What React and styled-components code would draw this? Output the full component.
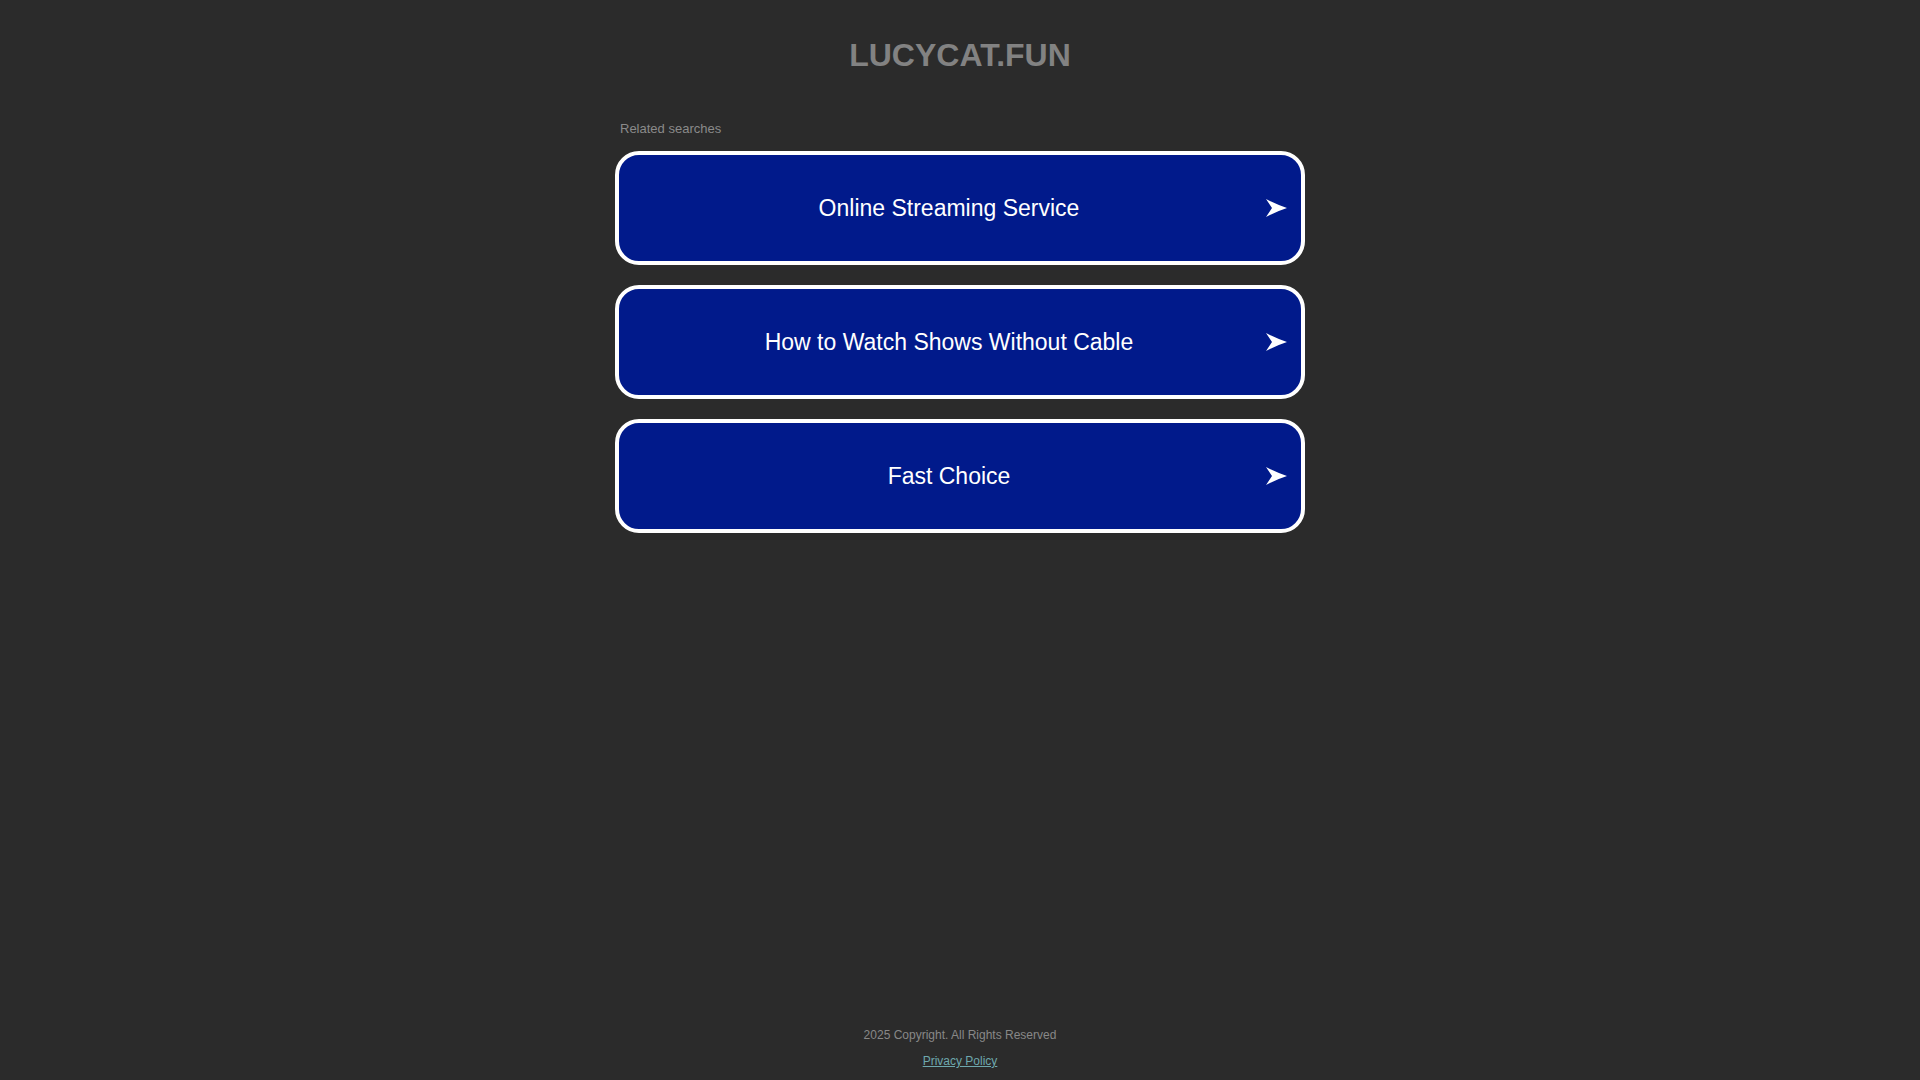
import React from "react";
import styled, { createGlobalStyle } from "styled-components";

const GlobalStyle = createGlobalStyle`
  html, body {
    margin: 0;
    padding: 0;
    background: #2b2b2b;
    font-family: "Liberation Sans", Arial, sans-serif;
  }
`;

const Page = styled.div`
  min-height: 100vh;
  display: flex;
  flex-direction: column;
  align-items: center;
`;

const Main = styled.main`
  flex: 1;
  width: 690px;
  padding-top: 37px;
`;

const Title = styled.h1`
  margin: 0;
  font-size: 32px;
  line-height: 36px;
  font-weight: bold;
  color: #828282;
  text-align: center;
`;

const Related = styled.div`
  margin: 48px 0 0 5px;
  font-size: 13px;
  line-height: 16px;
  color: #8a8a8a;
`;

const List = styled.div`
  margin-top: 14px;
  display: flex;
  flex-direction: column;
  gap: 20px;
`;

const Card = styled.a`
  display: flex;
  align-items: center;
  height: 106px;
  padding: 0 14px 0 13px;
  border: 4px solid #fff;
  border-radius: 24px;
  background: #011a8b;
  color: #fff;
  text-decoration: none;
  cursor: pointer;
`;

const CardText = styled.span`
  flex: 1;
  text-align: center;
  font-size: 23px;
  line-height: 28px;
`;

const Arrow = styled.svg`
  width: 21px;
  height: 18px;
  flex: none;
`;

const Footer = styled.footer`
  display: flex;
  flex-direction: column;
  align-items: center;
  gap: 12px;
  padding-bottom: 12px;
  font-size: 12px;
  line-height: 14px;
`;

const Copy = styled.div`
  color: #888;
`;

const Privacy = styled.a`
  color: #6ea8ae;
  text-decoration: underline;
`;

const searches = [
  "Online Streaming Service",
  "How to Watch Shows Without Cable",
  "Fast Choice",
];

export default function App() {
  return (
    <>
      <GlobalStyle />
      <Page>
        <Main>
          <Title>LUCYCAT.FUN</Title>
          <Related>Related searches</Related>
          <List>
            {searches.map((s) => (
              <Card key={s}>
                <CardText>{s}</CardText>
                <Arrow viewBox="0 0 21 18">
                  <path d="M0 0 Q9 5 21 9 Q9 13 0 18 L6 9 Z" fill="#fff" />
                </Arrow>
              </Card>
            ))}
          </List>
        </Main>
        <Footer>
          <Copy>2025 Copyright. All Rights Reserved</Copy>
          <Privacy href="#">Privacy Policy</Privacy>
        </Footer>
      </Page>
    </>
  );
}
